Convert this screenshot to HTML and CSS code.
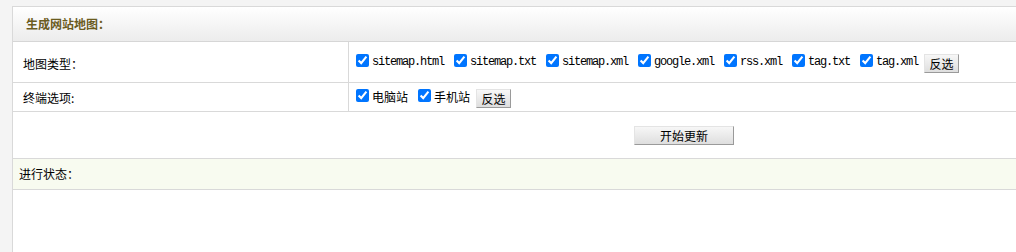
FILE: index.html
```html
<!DOCTYPE html>
<html lang="zh-CN">
<head>
<meta charset="utf-8">
<title>生成网站地图</title>
<link rel="stylesheet" href="styles.css">
</head>
<body>
<div class="panel">
  <div class="panel-head">生成网站地图：</div>
  <div class="row row-type">
    <div class="cell-label">地图类型：</div>
    <div class="cell-value">
      <label class="opt"><input type="checkbox" checked><span class="mono">sitemap.html</span></label>
      <label class="opt"><input type="checkbox" checked><span class="mono">sitemap.txt</span></label>
      <label class="opt"><input type="checkbox" checked><span class="mono">sitemap.xml</span></label>
      <label class="opt"><input type="checkbox" checked><span class="mono">google.xml</span></label>
      <label class="opt"><input type="checkbox" checked><span class="mono">rss.xml</span></label>
      <label class="opt"><input type="checkbox" checked><span class="mono">tag.txt</span></label>
      <label class="opt"><input type="checkbox" checked><span class="mono">tag.xml</span></label>
      <button class="btn btn-small" type="button">反选</button>
    </div>
  </div>
  <div class="row row-term">
    <div class="cell-label">终端选项:</div>
    <div class="cell-value">
      <label class="opt"><input type="checkbox" checked><span>电脑站</span></label>
      <label class="opt"><input type="checkbox" checked><span>手机站</span></label>
      <button class="btn btn-small" type="button">反选</button>
    </div>
  </div>
  <div class="row row-action">
    <div class="cell-blank"></div>
    <div class="cell-action">
      <button class="btn btn-wide" type="button">开始更新</button>
    </div>
  </div>
  <div class="status-head">进行状态：</div>
  <div class="status-body"></div>
</div>
</body>
</html>
```

FILE: styles.css
```css
html, body {
  margin: 0;
  padding: 0;
}
body {
  background: #f4f4f4;
  font-family: "Noto Sans CJK SC", "Liberation Sans", sans-serif;
  font-size: 12px;
  color: #000;
  padding: 6px 0 0 12px;
  height: 252px;
  box-sizing: border-box;
  overflow: hidden;
}
.panel {
  background: #fff;
  border-top: 1px solid #d9d9d9;
  border-left: 1px solid #d9d9d9;
  height: 100%;
  display: flex;
  flex-direction: column;
}
.panel-head {
  height: 34px;
  line-height: 34px;
  padding-left: 13px;
  font-weight: bold;
  color: #6b5c1f;
  background: linear-gradient(#ffffff, #ececec);
  border-bottom: 1px solid #d6d6d6;
}
.row {
  display: flex;
  border-bottom: 1px solid #d9d9d9;
}
.row-type { height: 40px; }
.row-term { height: 28px; }
.row-action { height: 46px; }
.cell-label {
  width: 325px;
  padding-left: 10px;
  border-right: 1px solid #d9d9d9;
  display: flex;
  align-items: center;
}
.row-type .cell-label { padding-top: 2px; }
.cell-value {
  flex: 1;
  display: flex;
  align-items: flex-start;
  padding-left: 7px;
  gap: 10px;
}
.row-type .cell-value { padding-top: 12px; }
.row-term .cell-value { padding-top: 6px; }
.opt {
  display: flex;
  align-items: flex-start;
  height: 19px;
}
.opt input {
  width: 13px;
  height: 13px;
  margin: 0 3px 0 0;
}
.opt span {
  line-height: 15px;
  white-space: nowrap;
}
.opt .mono {
  font-family: "Liberation Mono", monospace;
  letter-spacing: -1.2px;
  line-height: 16px;
}
.btn {
  height: 19px;
  padding: 0;
  font-family: "Noto Sans CJK SC", "Liberation Sans", sans-serif;
  font-size: 12px;
  line-height: 15px;
  color: #000;
  background: linear-gradient(#f7f7f7, #dedede);
  border: 1px solid;
  border-color: #e4e4e4 #9a9a9a #9a9a9a #e4e4e4;
  border-radius: 0;
}
.btn-small {
  width: 35px;
  margin-left: -4px;
}
.btn-wide {
  width: 100px;
}
.cell-blank {
  width: 336px;
}
.cell-action {
  flex: 1;
  display: flex;
  align-items: center;
  justify-content: center;
  padding-left: 3px;
}
.status-head {
  height: 30px;
  line-height: 30px;
  padding-left: 6px;
  background: #f8fbf0;
  border-bottom: 1px solid #d9d9d9;
}
.status-body {
  flex: 1;
}
```
